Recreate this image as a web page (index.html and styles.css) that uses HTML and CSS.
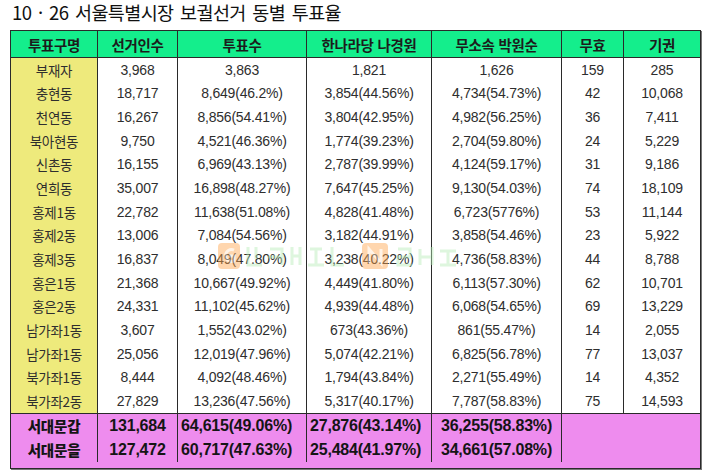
FILE: index.html
```html
<!DOCTYPE html>
<html lang="ko">
<head>
<meta charset="utf-8">
<title>10 · 26 서울특별시장 보궐선거 동별 투표율</title>
<link rel="stylesheet" href="styles.css">
</head>
<body>
<div class="page">
  <h1 class="title">10 · 26 서울특별시장 보궐선거 동별 투표율</h1>
  <div class="wrap">
    <table class="vote">
      <colgroup>
        <col class="c1"><col class="c2"><col class="c3"><col class="c4"><col class="c5"><col class="c6"><col class="c7">
      </colgroup>
      <thead>
        <tr><th>투표구명</th><th>선거인수</th><th>투표수</th><th>한나라당 나경원</th><th>무소속 박원순</th><th>무효</th><th>기권</th></tr>
      </thead>
      <tbody>
        <tr><td class="dong">부재자</td><td>3,968</td><td>3,863</td><td>1,821</td><td>1,626</td><td>159</td><td>285</td></tr>
        <tr><td class="dong">충현동</td><td>18,717</td><td>8,649(46.2%)</td><td>3,854(44.56%)</td><td>4,734(54.73%)</td><td>42</td><td>10,068</td></tr>
        <tr><td class="dong">천연동</td><td>16,267</td><td>8,856(54.41%)</td><td>3,804(42.95%)</td><td>4,982(56.25%)</td><td>36</td><td>7,411</td></tr>
        <tr><td class="dong">북아현동</td><td>9,750</td><td>4,521(46.36%)</td><td>1,774(39.23%)</td><td>2,704(59.80%)</td><td>24</td><td>5,229</td></tr>
        <tr><td class="dong">신촌동</td><td>16,155</td><td>6,969(43.13%)</td><td>2,787(39.99%)</td><td>4,124(59.17%)</td><td>31</td><td>9,186</td></tr>
        <tr><td class="dong">연희동</td><td>35,007</td><td>16,898(48.27%)</td><td>7,647(45.25%)</td><td>9,130(54.03%)</td><td>74</td><td>18,109</td></tr>
        <tr><td class="dong">홍제1동</td><td>22,782</td><td>11,638(51.08%)</td><td>4,828(41.48%)</td><td>6,723(5776%)</td><td>53</td><td>11,144</td></tr>
        <tr><td class="dong">홍제2동</td><td>13,006</td><td>7,084(54.56%)</td><td>3,182(44.91%)</td><td>3,858(54.46%)</td><td>23</td><td>5,922</td></tr>
        <tr><td class="dong">홍제3동</td><td>16,837</td><td>8,049(47.80%)</td><td>3,238(40.22%)</td><td>4,736(58.83%)</td><td>44</td><td>8,788</td></tr>
        <tr><td class="dong">홍은1동</td><td>21,368</td><td>10,667(49.92%)</td><td>4,449(41.80%)</td><td>6,113(57.30%)</td><td>62</td><td>10,701</td></tr>
        <tr><td class="dong">홍은2동</td><td>24,331</td><td>11,102(45.62%)</td><td>4,939(44.48%)</td><td>6,068(54.65%)</td><td>69</td><td>13,229</td></tr>
        <tr><td class="dong">남가좌1동</td><td>3,607</td><td>1,552(43.02%)</td><td>673(43.36%)</td><td>861(55.47%)</td><td>14</td><td>2,055</td></tr>
        <tr><td class="dong">남가좌1동</td><td>25,056</td><td>12,019(47.96%)</td><td>5,074(42.21%)</td><td>6,825(56.78%)</td><td>77</td><td>13,037</td></tr>
        <tr><td class="dong">북가좌1동</td><td>8,444</td><td>4,092(48.46%)</td><td>1,794(43.84%)</td><td>2,271(55.49%)</td><td>14</td><td>4,352</td></tr>
        <tr><td class="dong">북가좌2동</td><td>27,829</td><td>13,236(47.56%)</td><td>5,317(40.17%)</td><td>7,787(58.83%)</td><td>75</td><td>14,593</td></tr>
      </tbody>
      <tfoot>
        <tr class="first"><td>서대문갑</td><td>131,684</td><td class="l">64,615(49.06%)</td><td class="l">27,876(43.14%)</td><td>36,255(58.83%)</td><td colspan="2" class="empty"></td></tr>
        <tr><td>서대문을</td><td>127,472</td><td class="l">60,717(47.63%)</td><td class="l">25,484(41.97%)</td><td>34,661(57.08%)</td><td colspan="2" class="empty"></td></tr>
        <tr class="spacer"><td colspan="7"></td></tr>
      </tfoot>
    </table>
    <svg class="mark" width="250" height="30" viewBox="0 0 250 30" aria-hidden="true">
      <rect x="6" y="2" width="22" height="26" rx="4" fill="#ffa64d"/>
      <path d="M22 9 A6 6 0 1 0 22 20 L22 15 L17 15" fill="none" stroke="#ffe6cc" stroke-width="3"/>
      <g fill="none" stroke="#b8ecb8" stroke-width="3">
        <path d="M36 6 V24 H50 M44 6 V18"/>
        <path d="M58 8 H70 V24 M56 16 H72"/>
        <path d="M80 6 V24 M88 6 V24 M80 15 H88"/>
        <path d="M98 8 H110 M104 8 V24 M96 24 H112"/>
        <path d="M120 6 V24 H132"/>
      </g>
      <rect x="150" y="2" width="26" height="26" rx="4" fill="#ffa64d"/>
      <path d="M157 22 V8 L169 22 V8" fill="none" stroke="#ffe6cc" stroke-width="3"/>
      <g fill="none" stroke="#b8ecb8" stroke-width="3">
        <path d="M186 8 H198 V16 H186 V24 H200"/>
        <path d="M208 8 V24 M208 16 H220 M220 6 V24"/>
        <path d="M228 10 H244 M236 10 V24 M228 24 H244"/>
      </g>
    </svg>
  </div>
</div>
</body>
</html>
```
FILE: styles.css
```css
html, body {
  margin: 0;
  padding: 0;
  background: #ffffff;
}
body {
  font-family: "Liberation Sans", "Noto Sans CJK KR", sans-serif;
  color: #2a2a2a;
}
.page {
  width: 709px;
  height: 473px;
  padding: 0 0 0 10px;
  box-sizing: border-box;
}
.title {
  margin: 0;
  height: 30px;
  padding: 0 0 0 2px;
  box-sizing: border-box;
  font-family: "Noto Sans CJK KR", sans-serif;
  font-size: 18.5px;
  line-height: 24px;
  font-weight: 400;
  color: #111111;
  letter-spacing: -0.6px;
  word-spacing: 2px;
}
.wrap {
  position: relative;
  width: 690px;
}
.vote {
  width: 690px;
  table-layout: fixed;
  border-collapse: collapse;
  border: 1px solid #2a2a2a;
  box-shadow: 1px 1px 0 #777;
}
.c1 { width: 87px; }
.c2 { width: 80px; }
.c3 { width: 129px; }
.c4 { width: 125px; }
.c5 { width: 130px; }
.c6 { width: 62px; }
.c7 { width: 77px; }

.vote th {
  height: 26px;
  padding: 0;
  background: #14ee8c;
  border: 1px solid #2a2a2a;
  font-family: "Noto Sans CJK KR", sans-serif;
  font-size: 14.5px;
  font-weight: 700;
  color: #1c1c1c;
  text-align: center;
  letter-spacing: -0.3px;
}
.vote tbody td {
  height: 23.66px;
  padding: 0;
  border-left: 1px solid #2a2a2a;
  border-right: 1px solid #2a2a2a;
  font-size: 14px;
  text-align: center;
  color: #2e2e2e;
  white-space: nowrap;
  letter-spacing: -0.2px;
}
.vote tbody td.dong {
  background: #eeea7c;
  font-family: "Noto Sans CJK KR", sans-serif;
  font-size: 13.5px;
  letter-spacing: -0.3px;
}
.vote tfoot td {
  height: 24px;
  padding: 0;
  background: #ee8cee;
  border-left: 1px solid #2a2a2a;
  border-right: 1px solid #2a2a2a;
  font-size: 16px;
  font-weight: 700;
  color: #151515;
  text-align: center;
  white-space: nowrap;
  letter-spacing: -0.2px;
}
.vote tfoot td:first-child {
  font-family: "Noto Sans CJK KR", sans-serif;
  font-size: 14.5px;
  font-weight: 900;
}
.vote tfoot td.l {
  text-align: left;
  padding-left: 3px;
}
.vote tfoot tr.first td {
  border-top: 1px solid #2a2a2a;
}
.vote tfoot tr.spacer td {
  height: 6px;
  border-left: none;
  border-right: none;
}

.mark {
  position: absolute;
  left: 202px;
  top: 211px;
  pointer-events: none;
  opacity: 0.45;
}
```
